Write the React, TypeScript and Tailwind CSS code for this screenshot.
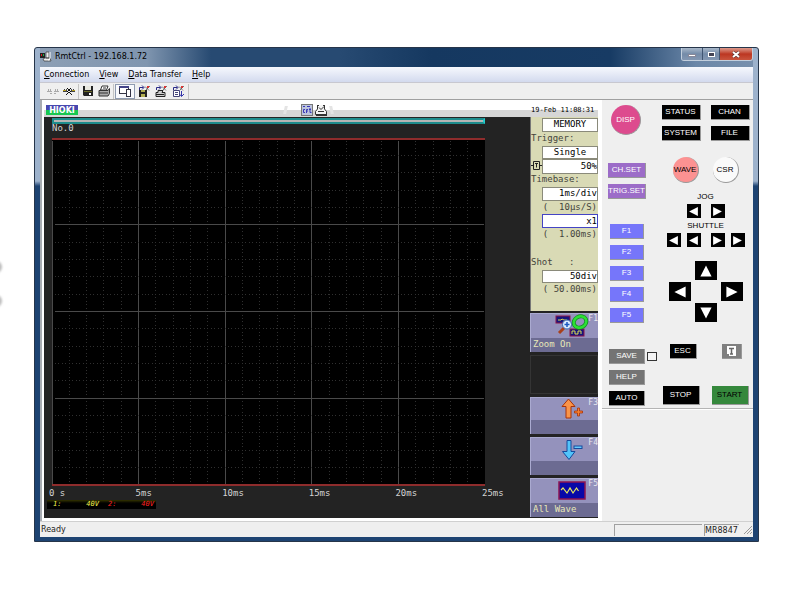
import type { ReactNode } from "react";

const mono = "font-['DejaVu_Sans_Mono',monospace]";
const ui = "font-['DejaVu_Sans',sans-serif]";

/** Monitor and recorder glyph in the title bar */
const AppIcon = () => (
  <svg className="h-[12px] w-[12px]" viewBox="0 0 12 12">
    <rect x="0" y="2" width="5" height="5" fill="#222" />
    <rect x="1" y="3" width="1" height="2" fill="#d22" />
    <rect x="3" y="3" width="1" height="2" fill="#2a4" />
    <path d="M6 1h3v6h-3zM3 8l2-1h5l1 3H4z" fill="#eee" stroke="#333" strokeWidth=".7" />
    <path d="M10 1v6q0 2-2 2" fill="none" stroke="#fff" />
  </svg>
);

const Connect = ({ on }: { on?: boolean }) => (
  <svg className="h-[12px] w-[12px]" viewBox="0 0 12 12" fill="none" stroke={on ? "#444" : "#aaa"}>
    <path d="M0 6.500h5M7 6.500h5M1.500 4v2M3.500 4v2M8.500 4v2M10.500 4v2" />
    {on ? <path d="M3 10l3-3 3 3M4 3l4 4M8 3L4 7" stroke="#111" /> : <path d="M3 8.500h2M7 8.500h2" />}
    {on && <path d="M0 5.500h3M9 5.500h3" stroke="#b8a020" />}
  </svg>
);

const SaveIcon = () => (
  <svg className="h-[12px] w-[12px]" viewBox="0 0 12 12">
    <path d="M1 1h10v10H2l-1-1z" fill="#222" />
    <rect x="3" y="1" width="6" height="4" fill="#e8e8e0" />
    <rect x="2" y="6" width="8" height="1" fill="#6b6b28" />
    <rect x="7" y="8" width="2" height="2" fill="#fff" />
  </svg>
);

const PrintIcon = () => (
  <svg className="h-[12px] w-[12px]" viewBox="0 0 12 12" stroke="#333">
    <path d="M4 1h6L8.500 5h-6z" fill="#fff" />
    <path d="M1 5.500h9l1.500-2v5L10 11H1z" fill="#aaa" />
    <path d="M1 8h9M5 3h3" fill="none" />
  </svg>
);

const WindowsIcon = () => (
  <svg className="h-[12px] w-[12px]" viewBox="0 0 12 12" stroke="#334">
    <rect x=".5" y="1.500" width="9" height="7" fill="#fff" />
    <path d="M0 2h10" stroke="#448" strokeWidth="2" />
    <rect x="7.500" y="4.500" width="4" height="7" fill="#fff" />
  </svg>
);

const TransferIcon = ({ kind }: { kind: "disk" | "printer" | "page" }) => (
  <svg className="h-[13px] w-[13px]" viewBox="0 0 13 13">
    <path d="M1.500 5V2.500h4M4 .5l2 2-2 2" fill="none" stroke="#2a2a88" />
    <path d="M7 1.500l4 4M12 1L8 5" fill="none" stroke="#555" strokeWidth=".8" />
    <rect x="9" y="1" width="2" height="2" fill="#d33" />
    {kind === "disk" && (
      <>
        <path d="M1 5h8v7H1z" fill="#222" />
        <path d="M3 5h4v2H3zM3 9h4v3H3z" fill="#b0ad50" />
      </>
    )}
    {kind === "printer" && (
      <path d="M3 5.500h5l-1 2h3v4H1v-4h2zM1 9.500h8" fill="#ccc" stroke="#222" />
    )}
    {kind === "page" && (
      <>
        <path d="M1.500 5.500h6v6h-6zM3 7.500h3M3 9.500h3" fill="#fff" stroke="#447" />
        <path d="M9.500 6v5M8 9.500l1.500 2L12 9" fill="none" stroke="#33a" />
      </>
    )}
  </svg>
);

type Tool = { name: string; icon: ReactNode };

const toolGroups: Tool[][] = [
  [
    { name: "Disconnect", icon: <Connect /> },
    { name: "Connect", icon: <Connect on /> },
  ],
  [
    { name: "Save", icon: <SaveIcon /> },
    { name: "Print", icon: <PrintIcon /> },
  ],
  [{ name: "Panel view", icon: <WindowsIcon /> }],
  [
    { name: "Transfer to disk", icon: <TransferIcon kind="disk" /> },
    { name: "Transfer to printer", icon: <TransferIcon kind="printer" /> },
    { name: "Transfer page", icon: <TransferIcon kind="page" /> },
  ],
];

const menus = ["Connection", "View", "Data Transfer", "Help"];

function TitleBar() {
  return (
    <header className="flex h-[19px] items-start bg-[linear-gradient(90deg,#8d9fb5_0%,#7f95af_15%,#274a72_24%,#274a72_42%,#153860_55%,#173b64_80%,#6b87a8_92%,#7890ad_100%)]">
      <div className="flex flex-1 items-center gap-[3px] pt-[3px]">
        <AppIcon />
        <h1 className="text-[8px] leading-[12px] text-black">RmtCtrl - 192.168.1.72</h1>
      </div>
      <div className="flex h-[13px] overflow-hidden rounded-b-[3px] border border-t-0 border-[#c3cfdd]">
        <button aria-label="Minimize" className="flex w-[21px] items-center justify-center border-r border-[#405572] bg-linear-to-b from-[#a9b8ca] via-[#748ba8] to-[#8397b2]">
          <span className="mt-[3px] h-[3px] w-[8px] border border-[#889] bg-white" />
        </button>
        <button aria-label="Maximize" className="flex w-[17px] items-center justify-center border-r border-[#405572] bg-linear-to-b from-[#a9b8ca] via-[#748ba8] to-[#8397b2]">
          <span className="h-[5px] w-[7px] border border-white bg-[#445]" />
        </button>
        <button aria-label="Close" className="flex w-[32px] items-center justify-center bg-linear-to-b from-[#dc998c] via-[#bc3621] to-[#c9543d]">
          <svg className="h-[7px] w-[8px]" viewBox="0 0 8 7">
            <path d="M1 1l6 5M7 1L1 6" stroke="#533" strokeWidth="3" />
            <path d="M1 1l6 5M7 1L1 6" stroke="#fff" strokeWidth="2" />
          </svg>
        </button>
      </div>
    </header>
  );
}

function Toolbar() {
  return (
    <div className="flex h-[17px] items-center border-b border-[#a0a0a0] bg-[#efefef] pl-[4px]">
      {toolGroups.map((group, i) => (
        <div
          key={i}
          className={`flex h-[15px] items-center gap-[4px] border-r px-[3px] ${
            i === 2 ? "ml-px border border-[#8f9bb0] bg-[#f8f9fc]" : "border-[#c4c4c4]"
          }`}
        >
          {group.map((tool) => (
            <button key={tool.name} aria-label={tool.name}>
              {tool.icon}
            </button>
          ))}
        </div>
      ))}
    </div>
  );
}

const major = "#4a4a4a";
const ticks = Array.from({ length: 25 }, (_, i) => i);

function Graph() {
  return (
    <svg className="h-[348px] w-full bg-black" viewBox="0 0 433 348" preserveAspectRatio="none" shapeRendering="crispEdges">
      {ticks.map((i) => (
        <line key={`v${i}`} x1={(i * 433) / 25} x2={(i * 433) / 25} y1="3" y2="346" stroke={i % 5 ? "#303030" : major} strokeDasharray={i % 5 ? "1 2.470" : undefined} />
      ))}
      {ticks.slice(0, 20).map((i) => (
        <line key={`h${i}`} y1={(i * 347) / 20} y2={(i * 347) / 20} x1="3" x2="432" stroke={i % 5 ? "#303030" : major} strokeDasharray={i % 5 ? "1 2.460" : undefined} />
      ))}
      <path d="M0 1h433M0 347h433" stroke="#8e2c2c" strokeWidth="2" />
    </svg>
  );
}

const times = ["0 s", "5ms", "10ms", "15ms", "20ms", "25ms"];

function Scope() {
  return (
    <section className={`min-w-0 flex-1 bg-[#232323] pl-[8px] text-[9px] text-[#d4d4d4] ${mono}`}>
      <div className="mr-[45px] pt-[1px]">
        <div className="h-[6px] border-2 border-[#1d8c8c] border-r-[#2cc] bg-[#b5b5b5]" />
        <p className="h-[14px] leading-[8px]">No.0</p>
        <Graph />
        <div className="mr-[3px] -ml-[3px] flex h-[14px] leading-[15px]">
          {times.map((t) => (
            <span key={t} className="w-1/5 shrink-0 whitespace-pre">{t}</span>
          ))}
        </div>
      </div>
      <div className="-ml-[5px] flex h-[9px] w-[109px] items-center bg-linear-to-b from-[#343400] to-black to-50% text-[7px] leading-[9px]">
        <span className="flex w-[55px] justify-between pr-[3px] pl-[6px] italic text-[#f4f44c]">
          <span>1:</span>
          <span>40V</span>
        </span>
        <span className="flex flex-1 justify-between pr-[2px] pl-[6px] italic text-[#ff2020]">
          <span>2:</span>
          <span>40V</span>
        </span>
      </div>
    </section>
  );
}

const Field = ({ label, value, center, active }: { label: string; value: string; center?: boolean; active?: boolean }) => (
  <button
    aria-label={`${label} ${value}`}
    className={`ml-[11px] flex items-center border bg-white text-black ${
      center ? "justify-center" : "justify-end"
    } ${active ? "border-[#4444c4]" : "border-[#8a8a7a]"}`}
  >
    {value}
  </button>
);

function Settings() {
  return (
    <div className="grid h-[194px] auto-rows-fr border-l border-[#777] bg-[#d9dab5] pt-[1px] text-[9px] leading-[13px] whitespace-pre text-[#44443c]">
      <Field label="Mode" value="MEMORY" center />
      <span>Trigger:</span>
      <Field label="Trigger mode" value="Single" center />
      <div className="grid grid-cols-[11px_1fr]">
        <svg className="h-[13px] w-[11px]" viewBox="0 0 11 13" fill="none" stroke="#222">
          <path d="M0 6.500h2M9 6.500h2M2.500 2.500h6v8h-6zM4 4.500h3M5.500 4.500v4" />
        </svg>
        <button aria-label="Trigger position 50%" className="flex items-center justify-end border border-[#8a8a7a] bg-white text-black">
          50%
        </button>
      </div>
      <span>Timebase:</span>
      <Field label="Timebase" value="1ms/div" />
      <span className="pr-[1px] text-right">{"(  10μs/S)"}</span>
      <Field label="Magnification" value="x1" active />
      <span className="pr-[1px] text-right">(  1.00ms)</span>
      <span />
      <span>Shot   :</span>
      <Field label="Shot" value="50div" />
      <span className="pr-[1px] text-right">( 50.00ms)</span>
      <span />
    </div>
  );
}

const ZoomOnIcon = () => (
  <svg className="h-[23px] w-[34px]" viewBox="0 0 34 23" fill="none">
    <rect x="1" y="2" width="14" height="7" fill="#16167c" stroke="#8c1448" />
    <path d="M3 6h3l1-1 2 1h3" stroke="#dede50" />
    <rect x="15" y="15" width="14" height="7" fill="#16167c" stroke="#8c1448" />
    <path d="M17 20v-3h3v3h3v-3h3v3" stroke="#dede50" />
    <path d="M9 14l-5 5" stroke="#a8401c" strokeWidth="3" />
    <ellipse cx="25" cy="8" rx="6.500" ry="5.500" stroke="#138c20" strokeWidth="4" transform="rotate(-28 25 8)" />
    <ellipse cx="25" cy="8" rx="6.500" ry="5.500" stroke="#2be034" strokeWidth="2.500" transform="rotate(-28 25 8)" />
    <circle cx="12" cy="10.500" r="4.500" fill="#dcecff" stroke="#3a68b0" />
    <path d="M9.500 10.500h5M12 8v5" stroke="#1a58c0" strokeWidth="1.500" />
  </svg>
);

const UpIcon = () => (
  <svg className="h-[22px] w-[24px]" viewBox="0 0 24 22" stroke="#a83208">
    <path d="M8.500 1L15 8.500h-4V20H6V8.500H2z" fill="#fa9448" />
    <path d="M14.500 13h3v-3h2v3h3v2h-3v3h-2v-3h-3z" fill="#f98030" strokeWidth=".8" />
  </svg>
);

const DownIcon = () => (
  <svg className="h-[22px] w-[24px]" viewBox="0 0 24 22" stroke="#164a9c">
    <path d="M7 1.500h4v11h4L9 20.500l-6.500-8H7z" fill="#52c4fa" />
    <rect x="14" y="7" width="8" height="2.500" fill="#66ccff" />
  </svg>
);

const WaveIcon = () => (
  <svg className="h-[19px] w-[28px]" viewBox="0 0 28 19" fill="none">
    <rect x="1" y="1" width="26" height="17" fill="#0808a8" stroke="#8c1450" strokeWidth="1.500" />
    <path d="M3 9l2-2 4 5 3-5 3 5 3.500-5 2 3" stroke="#e6e660" strokeWidth="1.200" />
  </svg>
);

type SoftKeyProps = { name: string; caption?: string; children?: ReactNode };

const SoftKey = ({ name, caption, children }: SoftKeyProps) => (
  <button
    aria-label={caption ?? name}
    className="relative flex flex-1 flex-col border-t border-l border-[#aaaad0] bg-linear-to-b from-[#9492bc] from-62% to-[#6c6b92] to-62% text-left"
  >
    <span className="flex h-[23px] w-full items-center justify-center pl-[14px]">{children}</span>
    <span className="pl-[2px] text-[9px] leading-[15px] text-[#e8e8b8]">{caption}</span>
    <span className="absolute top-0 right-0 text-[8px] leading-[9px] text-[#e8e8ee]">{name}</span>
  </button>
);

function Sidebar() {
  return (
    <aside className={`flex w-[68px] flex-col bg-[#232323] ${mono}`}>
      <Settings />
      <div className="flex flex-1 flex-col gap-[3px] pt-[2px] pb-[1px]">
        <SoftKey name="F1" caption="Zoom On">
          <ZoomOnIcon />
        </SoftKey>
        <div className="flex-1 border border-[#343434]" />
        <SoftKey name="F3">
          <UpIcon />
        </SoftKey>
        <SoftKey name="F4">
          <DownIcon />
        </SoftKey>
        <SoftKey name="F5" caption="All Wave">
          <WaveIcon />
        </SoftKey>
      </div>
    </aside>
  );
}

function RemoteScreen() {
  return (
    <div className="flex min-w-0 flex-1 flex-col border-l-2 border-[#a8acb2] bg-white pr-[4px] pb-[3px] pl-[2px]">
      <div className="flex h-[17px] items-end bg-linear-to-b from-white from-60% to-[#d6d6d6] to-60% pb-[1px] pl-[2px]">
        <span className="mb-[1px] h-[10px] w-[32px] bg-linear-to-b from-[#4848b0] from-50% to-[#18c850] to-50% text-center font-['DejaVu_Sans',sans-serif] text-[8px] leading-[12px] font-bold text-white">
          HIOKI
        </span>
        <div className="flex flex-1 items-center justify-center gap-[2px] pr-[9px] pl-[16px]">
          <span className="mr-[12px] h-[8px] w-[3px] -skew-x-12 bg-[#e4e4e4]" />
          <svg className="h-[12px] w-[12px]" viewBox="0 0 12 12" fill="none">
            <rect x=".5" y=".5" width="11" height="11" fill="#bcc4dc" stroke="#777" />
            <path d="M4 5.500H2.500v3H4M5.500 9V5.500H7M5.500 7H7M9 4v4.500h1.500M8 5.500h2M2 2.500h2M6 2.500h3" stroke="#3838b8" />
          </svg>
          <svg className="h-[12px] w-[13px]" viewBox="0 0 13 12" fill="none" stroke="#333">
            <path d="M2.500 1v4l-2 2.500v3h11v-3l-2-2.500V1" fill="#f4f4f4" />
            <path d="M1 11h11" strokeWidth="2" />
            <path d="M2 1.500h2M8 1.500h2M4 3.500l2 2 3-3M3 7.500h6" />
          </svg>
          <span className="h-[8px] w-[3px] skew-x-12 bg-[#e4e4e4]" />
        </div>
        <time className={`w-[67px] text-[7px] leading-[11px] whitespace-nowrap text-black ${mono}`}>19-Feb 11:08:31</time>
      </div>
      <div className="flex h-[401px]">
        <Scope />
        <Sidebar />
      </div>
    </div>
  );
}

type KeyProps = { label: string; className: string };

const Key = ({ label, className }: KeyProps) => (
  <button className={`flex items-center justify-center border-r border-b border-[#999] text-[8px] leading-[10px] ${className}`}>
    {label}
  </button>
);

const points = {
  left: "9,1 9,9 1,5",
  right: "1,1 1,9 9,5",
  up: "1,9 9,9 5,1",
  down: "1,1 9,1 5,9",
};

const Arrow = ({ dir, label, big }: { dir: keyof typeof points; label: string; big?: boolean }) => (
  <button aria-label={label} className={`flex items-center justify-center bg-black ${big ? "h-[19px] w-[22px]" : "h-[14px] w-[14px]"}`}>
    <svg className={big ? "h-[14px] w-[14px]" : "h-[11px] w-[11px]"} viewBox="0 0 10 10">
      <polygon points={points[dir]} fill="#fff" />
    </svg>
  </button>
);

const black = "bg-black text-white";

function LeftKeys() {
  return (
    <div className="flex w-[56px] flex-col pt-[5px] pl-[5px]">
      <Key label="DISP" className="ml-[4px] h-[30px] w-[30px] rounded-full bg-[#dd4b8e] text-white" />
      <div className="mt-[28px] flex flex-col gap-[6px]">
        <Key label="CH.SET" className="ml-[1px] h-[15px] w-[38px] bg-[#9c6cc8] text-white" />
        <Key label="TRIG.SET" className="ml-[1px] h-[15px] w-[38px] bg-[#9c6cc8] whitespace-nowrap text-white" />
      </div>
      <div className="mt-[25px] flex flex-col gap-[6px] pl-[3px]">
        {["F1", "F2", "F3", "F4", "F5"].map((f) => (
          <Key key={f} label={f} className="h-[15px] w-[34px] bg-[#7676fa] text-white" />
        ))}
      </div>
      <div className="mt-[26px] flex flex-col gap-[6px] pl-[2px]">
        <div className="flex items-center gap-[2px]">
          <Key label="SAVE" className="h-[15px] w-[36px] bg-[#747474] text-white" />
          <input type="checkbox" aria-label="Save lamp" className="h-[9px] w-[10px] appearance-none border border-[#333] bg-[#f4f4f4]" />
        </div>
        <Key label="HELP" className="h-[15px] w-[36px] bg-[#747474] text-white" />
        <Key label="AUTO" className={`h-[15px] w-[36px] ${black}`} />
      </div>
    </div>
  );
}

function RightKeys() {
  return (
    <div className="flex flex-1 flex-col items-center pt-[5px] text-black">
      <div className="grid grid-cols-2 gap-x-[10px] gap-y-[6px]">
        {["STATUS", "CHAN", "SYSTEM", "FILE"].map((k) => (
          <Key key={k} label={k} className={`h-[15px] w-[39px] ${black}`} />
        ))}
      </div>
      <div className="mt-[16px] flex gap-[14px]">
        <Key label="WAVE" className="h-[26px] w-[26px] rounded-full bg-[#fc9292] text-black" />
        <Key label="CSR" className="h-[26px] w-[26px] rounded-full bg-[#fafafa] text-black" />
      </div>
      <span className="mt-[9px] text-[8px] leading-[10px]">JOG</span>
      <div className="mt-[2px] flex gap-[10px]">
        <Arrow dir="left" label="Jog left" />
        <Arrow dir="right" label="Jog right" />
      </div>
      <span className="mt-[3px] text-[8px] leading-[10px]">SHUTTLE</span>
      <div className="mt-[2px] flex gap-[10px]">
        <div className="flex gap-[6px]">
          <Arrow dir="left" label="Shuttle fast left" />
          <Arrow dir="left" label="Shuttle left" />
        </div>
        <div className="flex gap-[6px]">
          <Arrow dir="right" label="Shuttle right" />
          <Arrow dir="right" label="Shuttle fast right" />
        </div>
      </div>
      <div className="mt-[14px] flex flex-col items-center gap-[2px]">
        <Arrow dir="up" label="Up" big />
        <div className="flex gap-[30px]">
          <Arrow dir="left" label="Left" big />
          <Arrow dir="right" label="Right" big />
        </div>
        <Arrow dir="down" label="Down" big />
      </div>
      <div className="mt-[22px] flex gap-[25px]">
        <Key label="ESC" className={`h-[15px] w-[27px] ${black}`} />
        <button aria-label="Manual trigger" className="flex h-[15px] w-[20px] items-center justify-center border-r border-b border-[#999] bg-[#808080]">
          <svg className="h-[11px] w-[11px]" viewBox="0 0 11 11">
            <path d="M1 0h9v10H3v-2H1z" fill="#fff" />
            <path d="M3 2.500h5M5.500 2.500V8M4 8h3" stroke="#666" strokeWidth="1.500" />
          </svg>
        </button>
      </div>
      <div className="mt-[27px] flex gap-[12px]">
        <Key label="STOP" className={`h-[19px] w-[37px] ${black}`} />
        <Key label="START" className="h-[19px] w-[37px] bg-[#35883c] text-black" />
      </div>
    </div>
  );
}

export default function App() {
  return (
    <div className="relative min-h-screen bg-white pt-[47px] pr-[38px] pb-[49px] pl-[34px]">
      <span className="absolute top-[261px] -left-[10px] h-[12px] w-[12px] rounded-full bg-[#bbb] blur-[1px]" />
      <span className="absolute top-[295px] -left-[10px] h-[12px] w-[12px] rounded-full bg-[#bbb] blur-[1px]" />
      <main className={`rounded-t-[3px] border border-[#26354a] bg-linear-to-b from-[#9db2cc] from-27% to-[#1d4372] to-28% px-[5px] pb-[4px] ${ui}`}>
        <TitleBar />
        <nav className="flex h-[16px] items-center gap-[10px] border-b border-[#c8c8d0] bg-linear-to-b from-[#f6f8fd] to-[#d3daee] pl-[4px] text-[8px] leading-[12px] text-black">
          {menus.map((m) => (
            <button key={m}>
              <span className="underline">{m[0]}</span>
              {m.slice(1)}
            </button>
          ))}
        </nav>
        <Toolbar />
        <div className="flex">
          <RemoteScreen />
          <div className="w-[151px] bg-[#efefef] font-['Liberation_Sans',sans-serif]">
            <div className="flex h-[309px] border-b border-[#b4b4b4]">
              <LeftKeys />
              <RightKeys />
            </div>
            <div className="border-t border-white" />
          </div>
        </div>
        <footer className="flex h-[16px] items-center border-t border-[#d0d0d0] bg-[#efefef] text-[8px] leading-[12px] text-[#222]">
          <span className="flex-1 pl-[1px]">Ready</span>
          <span className="h-[12px] w-[88px] border-t border-l border-[#a0a0a0]" />
          <span className="ml-[2px] h-[12px] w-[35px] border-t border-l border-[#a0a0a0]">MR8847</span>
          <svg className="ml-[4px] h-[10px] w-[10px]" viewBox="0 0 10 10" stroke="#999">
            <path d="M1 9l8-8M4 9l5-5M7 9l2-2" />
          </svg>
        </footer>
      </main>
    </div>
  );
}
